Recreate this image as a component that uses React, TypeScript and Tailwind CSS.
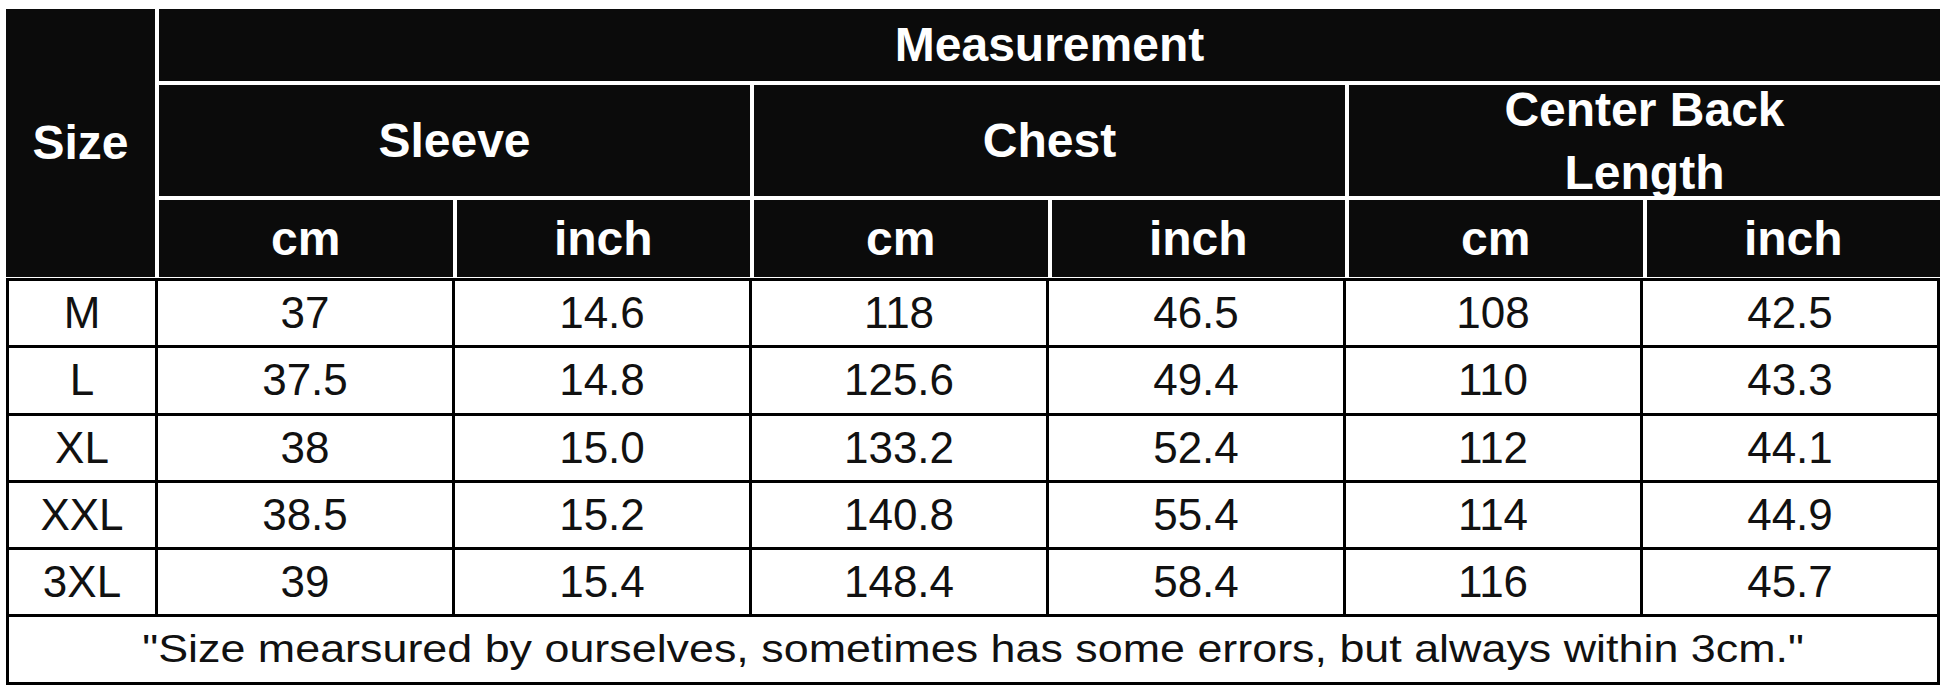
const ROWS: { size: string; values: string[] }[] = [
  { size: "M", values: ["37", "14.6", "118", "46.5", "108", "42.5"] },
  { size: "L", values: ["37.5", "14.8", "125.6", "49.4", "110", "43.3"] },
  { size: "XL", values: ["38", "15.0", "133.2", "52.4", "112", "44.1"] },
  { size: "XXL", values: ["38.5", "15.2", "140.8", "55.4", "114", "44.9"] },
  { size: "3XL", values: ["39", "15.4", "148.4", "58.4", "116", "45.7"] },
];

const GROUPS = ["Sleeve", "Chest", "Center Back Length"];

function HeadCell({ children, className = "" }: { children: React.ReactNode; className?: string }) {
  return (
    <div
      className={`flex items-center justify-center bg-[#0b0b0b] text-center text-[48px] font-bold text-white ${className}`}
    >
      {children}
    </div>
  );
}

export default function App() {
  return (
    <div className="min-h-[697px] w-[1946px] bg-white font-['Liberation_Sans',Arial,sans-serif]">
      <div className="ml-[6px] w-[1934px] pt-[9px]">
        {/* header */}
        <div className="grid grid-cols-[149px_repeat(6,1fr)] grid-rows-[72px_111px_77px] gap-[4px] bg-white">
          <HeadCell className="row-span-3">Size</HeadCell>
          <HeadCell className="col-span-6">Measurement</HeadCell>
          {GROUPS.map((g) => (
            <HeadCell key={g} className="col-span-2 leading-[63px]">
              <span className="relative z-10 block w-[330px]">{g}</span>
            </HeadCell>
          ))}
          {GROUPS.flatMap((g) => [
            <HeadCell key={`${g}-cm`}>cm</HeadCell>,
            <HeadCell key={`${g}-in`}>inch</HeadCell>,
          ])}
        </div>

        {/* body */}
        <div className="mt-px grid grid-cols-[146px_repeat(6,1fr)] auto-rows-[64.3px] gap-[3px] bg-black p-[3px] text-[44px] text-[#111]">
          {ROWS.map((r) => [
            <div key={`${r.size}-s`} className="flex items-center justify-center bg-white">
              {r.size}
            </div>,
            ...r.values.map((v, i) => (
              <div key={`${r.size}-${i}`} className="flex items-center justify-center bg-white">
                {v}
              </div>
            )),
          ])}
          <div className="col-span-7 flex items-center justify-center overflow-hidden bg-white">
            <span className="inline-block origin-center scale-x-[1.18] text-[38px] whitespace-nowrap">
              "Size mearsured by ourselves, sometimes has some errors, but always within 3cm."
            </span>
          </div>
        </div>
      </div>
    </div>
  );
}
